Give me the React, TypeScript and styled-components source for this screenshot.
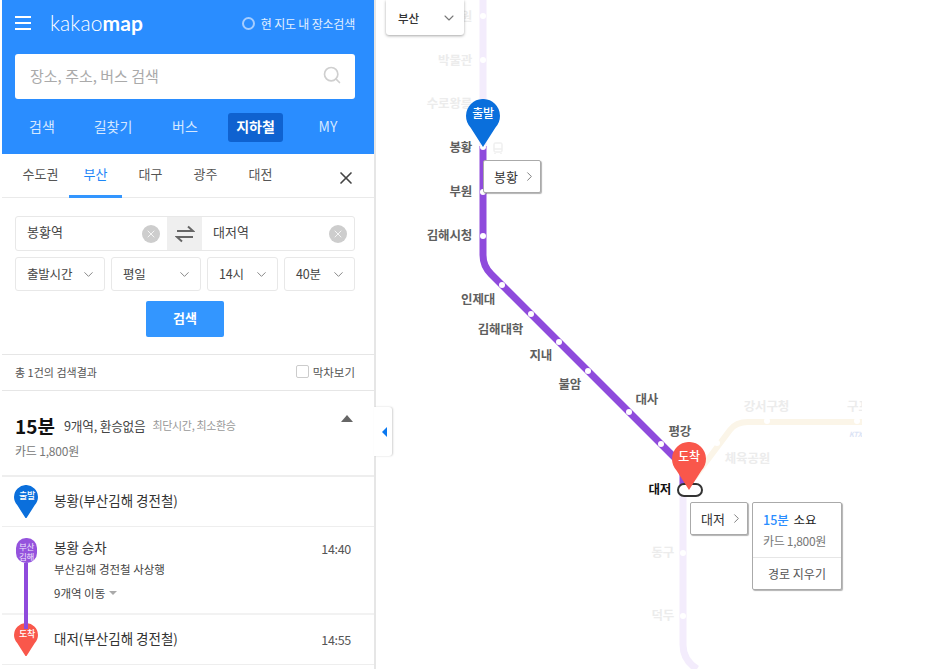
import React from "react";
import styled, { createGlobalStyle } from "styled-components";
import { ChevronDown, ChevronRight, Search, X } from "lucide-react";

const MAP_LEFT = 376;

const GlobalStyle = createGlobalStyle`
    html, body {
        margin: 0;
        padding: 0;
        height: 669px;
        overflow: hidden;
        background: #fff;
    }
    * {
        box-sizing: border-box;
        font-family: "Noto Sans CJK KR", "Noto Sans", sans-serif;
    }
`;

type Tone = "main" | "faint" | "dark";

const stations: { name: string; right: number; y: number; tone: Tone }[] = [
    { name: "연지공원", right: 472, y: 16, tone: "faint" },
    { name: "박물관", right: 472, y: 60, tone: "faint" },
    { name: "수로왕릉", right: 472, y: 103, tone: "faint" },
    { name: "봉황", right: 472, y: 147, tone: "main" },
    { name: "부원", right: 472, y: 191, tone: "main" },
    { name: "김해시청", right: 472, y: 235, tone: "main" },
    { name: "인제대", right: 495, y: 299, tone: "main" },
    { name: "김해대학", right: 523, y: 329, tone: "main" },
    { name: "지내", right: 552, y: 355, tone: "main" },
    { name: "불암", right: 581, y: 384, tone: "main" },
    { name: "대사", right: 658, y: 399, tone: "main" },
    { name: "평강", right: 691, y: 431, tone: "main" },
    { name: "대저", right: 671, y: 489, tone: "dark" },
    { name: "체육공원", right: 770, y: 458, tone: "faint" },
    { name: "강서구청", right: 789, y: 406, tone: "faint" },
    { name: "동구", right: 674, y: 552, tone: "faint" },
    { name: "덕두", right: 674, y: 615, tone: "faint" },
];

const dots = [
    [483, 16], [483, 60], [483, 147], [483, 192], [483, 236],
    [502, 285], [531, 314], [559, 342], [588, 371], [629, 412], [661, 444],
    [683, 553], [683, 616], [717, 443], [767, 421], [857, 421],
];

const Pin = ({ color, size }: { color: string; size: number }) => (
    <svg width={size} height={size * 1.41} viewBox="0 0 34 48" style={{ display: "block" }}>
        <path d="M17 48 L4.5 28.5 A17 17 0 1 1 29.5 28.5 Z" fill={color} />
    </svg>
);

const MapDrawing = () => (
    <MapSvg width="486" height="669" viewBox={`${MAP_LEFT} 0 486 669`}>
        <path d="M483 0V146" stroke="#f3ecfc" strokeWidth="7" fill="none" />
        <path d="M683 490V645Q683 660 697 669" stroke="#f3ecfc" strokeWidth="7" fill="none" />
        <path d="M694 478L730 430Q736 422 748 422H862" stroke="#fbf5e8" strokeWidth="6" fill="none" />
        <path
            d="M483 146V255Q483 266 491 274L675 458Q683 466 683 476V490"
            stroke="#8f4bdc"
            strokeWidth="7"
            fill="none"
        />
        {dots.map(([x, y]) => (
            <circle key={`${x}-${y}`} cx={x} cy={y} r="3" fill="#fff" />
        ))}
        <rect x="678" y="484" width="24" height="12" rx="6" fill="#fff" stroke="#333" strokeWidth="2" />
        <g stroke="#f0f0f0" strokeWidth="1.5" fill="none">
            <rect x="494" y="143" width="8" height="9" rx="1.5" />
            <path d="M494 149H502M495 153V154M501 153V154" />
        </g>
    </MapSvg>
);

export default function App() {
    return (
        <Page>
            <GlobalStyle />
            <Sidebar>
                <Header>
                    <TopBar>
                        <MenuIcon>
                            <i />
                            <i />
                            <i />
                        </MenuIcon>
                        <Logo>
                            kakao<b>map</b>
                        </Logo>
                        <AreaSearch>
                            <Radio />
                            현 지도 내 장소검색
                        </AreaSearch>
                    </TopBar>
                    <SearchBox>
                        <span>장소, 주소, 버스 검색</span>
                        <Search size={20} color="#cfcfcf" strokeWidth={2} />
                    </SearchBox>
                    <Nav>
                        <NavItem>검색</NavItem>
                        <NavItem>길찾기</NavItem>
                        <NavItem>버스</NavItem>
                        <NavItem $active>지하철</NavItem>
                        <NavItem>MY</NavItem>
                    </Nav>
                </Header>

                <Regions>
                    <Region>수도권</Region>
                    <Region $active>부산</Region>
                    <Region>대구</Region>
                    <Region>광주</Region>
                    <Region>대전</Region>
                    <CloseBtn>
                        <X size={20} color="#444" strokeWidth={2} />
                    </CloseBtn>
                </Regions>

                <Form>
                    <RouteInputs>
                        <RouteField>
                            <span>봉황역</span>
                            <ClearBtn>
                                <X size={12} color="#fff" strokeWidth={1.6} />
                            </ClearBtn>
                        </RouteField>
                        <SwapBtn>
                            <svg width="20" height="18" viewBox="0 0 20 18" fill="none" stroke="#666" strokeWidth="2">
                                <path d="M2 6H18L13 1.5" />
                                <path d="M18 12H2L7 16.5" />
                            </svg>
                        </SwapBtn>
                        <RouteField>
                            <span>대저역</span>
                            <ClearBtn>
                                <X size={12} color="#fff" strokeWidth={1.6} />
                            </ClearBtn>
                        </RouteField>
                    </RouteInputs>
                    <Selects>
                        <SelectBox>
                            <span>출발시간</span>
                            <ChevronDown size={15} color="#888" strokeWidth={1.6} />
                        </SelectBox>
                        <SelectBox>
                            <span>평일</span>
                            <ChevronDown size={15} color="#888" strokeWidth={1.6} />
                        </SelectBox>
                        <SelectBox>
                            <span>14시</span>
                            <ChevronDown size={15} color="#888" strokeWidth={1.6} />
                        </SelectBox>
                        <SelectBox>
                            <span>40분</span>
                            <ChevronDown size={15} color="#888" strokeWidth={1.6} />
                        </SelectBox>
                    </Selects>
                    <SubmitBtn>검색</SubmitBtn>
                </Form>

                <CountRow>
                    <span>총 1건의 검색결과</span>
                    <LastTrain>
                        <CheckBox />
                        막차보기
                    </LastTrain>
                </CountRow>

                <Summary>
                    <SummaryTop>
                        <Duration>15분</Duration>
                        <Stops>9개역, 환승없음</Stops>
                        <Tags>최단시간, 최소환승</Tags>
                        <CollapseArrow />
                    </SummaryTop>
                    <Fare>카드 1,800원</Fare>
                </Summary>

                <StepRow>
                    <StepMark>
                        <Pin color="#0a6fdc" size={24} />
                        <PinLabel $size={9} $top={6}>출발</PinLabel>
                    </StepMark>
                    <StepTitle>봉황(부산김해 경전철)</StepTitle>
                </StepRow>

                <RideRow>
                    <LineBadge>
                        <span>부산</span>
                        <span>김해</span>
                    </LineBadge>
                    <LineTrack />
                    <RideBody>
                        <RideHead>
                            <StepTitle>봉황 승차</StepTitle>
                            <Time>14:40</Time>
                        </RideHead>
                        <RideDirection>부산김해 경전철 사상행</RideDirection>
                        <RideStops>
                            9개역 이동
                            <SmallArrow />
                        </RideStops>
                    </RideBody>
                </RideRow>

                <StepRow>
                    <StepMark>
                        <Pin color="#f9574b" size={24} />
                        <PinLabel $size={9} $top={6}>도착</PinLabel>
                    </StepMark>
                    <StepTitle>대저(부산김해 경전철)</StepTitle>
                    <Time>14:55</Time>
                </StepRow>
            </Sidebar>

            <PanelToggle>
                <ToggleArrow />
            </PanelToggle>

            <MapArea>
                <MapDrawing />
                {stations.map((s) => (
                    <StationLabel key={s.name} $right={s.right} $y={s.y} $tone={s.tone}>
                        {s.name}
                    </StationLabel>
                ))}
                <ClippedLabel>구포</ClippedLabel>
                <KtxMark>KTX</KtxMark>

                <CityDropdown>
                    부산
                    <ChevronDown size={16} color="#777" strokeWidth={1.6} />
                </CityDropdown>

                <MapPin $x={483} $tipY={147} $w={34}>
                    <Pin color="#0a6fdc" size={34} />
                    <PinLabel $size={12} $top={7}>출발</PinLabel>
                </MapPin>
                <MapPin $x={689} $tipY={490} $w={34}>
                    <Pin color="#f9574b" size={34} />
                    <PinLabel $size={12} $top={7}>도착</PinLabel>
                </MapPin>

                <StationPopup $x={483} $y={160}>
                    봉황
                    <ChevronRight size={15} color="#777" strokeWidth={1.5} />
                </StationPopup>
                <StationPopup $x={690} $y={502}>
                    대저
                    <ChevronRight size={15} color="#777" strokeWidth={1.5} />
                </StationPopup>

                <InfoCard>
                    <InfoTop>
                        <InfoTime>
                            <em>15분</em> 소요
                        </InfoTime>
                        <InfoFare>카드 1,800원</InfoFare>
                    </InfoTop>
                    <InfoClear>경로 지우기</InfoClear>
                </InfoCard>
            </MapArea>
        </Page>
    );
}

const Page = styled.div`
    position: relative;
    display: flex;
    width: 927px;
    height: 669px;
    overflow: hidden;
    background: #fff;
`;

const Sidebar = styled.aside`
    flex: 0 0 376px;
    min-width: 0;
    height: 669px;
    padding-left: 2px;
    border-right: 2px solid #e6e6e6;
    display: flex;
    flex-direction: column;
    background: #fff;
    z-index: 2;
    color: #333;
`;

const Header = styled.header`
    height: 154px;
    flex: none;
    padding: 0 19px 0 13px;
    background: #2a8dff;
    color: #fff;
`;

const TopBar = styled.div`
    height: 54px;
    display: flex;
    align-items: center;
`;

const MenuIcon = styled.div`
    width: 16px;
    height: 14px;
    display: flex;
    flex-direction: column;
    justify-content: space-between;
    margin-top: -9px;

    i {
        display: block;
        height: 2px;
        background: #fff;
    }
`;

const Logo = styled.div`
    margin: -10px 0 0 19px;
    font-family: "Lato", sans-serif;
    font-size: 21px;
    font-weight: 300;
    letter-spacing: 0.1px;

    b {
        font-family: "Lato", sans-serif;
        font-weight: 700;
    }
`;

const AreaSearch = styled.div`
    margin: -7px 0 0 auto;
    display: flex;
    align-items: center;
    gap: 6px;
    font-size: 12px;
    color: #e3f0ff;
    letter-spacing: -0.2px;
`;

const Radio = styled.span`
    width: 13px;
    height: 13px;
    border: 2px solid #a5cdff;
    border-radius: 50%;
`;

const SearchBox = styled.div`
    height: 45px;
    display: flex;
    align-items: center;
    justify-content: space-between;
    padding: 0 13px 3px 15px;
    background: #fff;
    border-radius: 3px;
    color: #aaa;
    font-size: 15px;
`;

const Nav = styled.nav`
    margin-top: 14px;
    height: 29px;
    display: grid;
    grid-template-columns: 54px 88px 56px 15px 55px 18px 54px;

    & > :nth-child(4) {
        grid-column: 5;
    }
    & > :nth-child(5) {
        grid-column: 7;
    }
`;

const NavItem = styled.div<{ $active?: boolean }>`
    display: flex;
    align-items: center;
    justify-content: center;
    padding-bottom: 4px;
    border-radius: 3px;
    font-size: 14px;
    font-weight: ${(p) => (p.$active ? 700 : 400)};
    color: ${(p) => (p.$active ? "#fff" : "#d5e8ff")};
    background: ${(p) => (p.$active ? "#0f62d0" : "transparent")};
`;

const Regions = styled.div`
    position: relative;
    height: 44px;
    flex: none;
    display: grid;
    grid-template-columns: 11px repeat(5, 55px);
    border-bottom: 1px solid #eaeaea;

    & > :nth-child(1) {
        grid-column: 2;
    }
`;

const Region = styled.div<{ $active?: boolean }>`
    display: flex;
    align-items: center;
    justify-content: center;
    height: 44px;
    margin: 0 1px;
    padding-bottom: 2px;
    font-size: 13px;
    color: ${(p) => (p.$active ? "#1d86f7" : "#555")};
    border-bottom: 3px solid ${(p) => (p.$active ? "#3396ff" : "transparent")};
`;

const CloseBtn = styled.div`
    position: absolute;
    right: 18px;
    top: 14px;
    line-height: 0;
`;

const Form = styled.div`
    height: 157px;
    flex: none;
    padding: 18px 19px 0 13px;
    border-bottom: 1px solid #e6e6e6;
    display: flex;
    flex-direction: column;
`;

const RouteInputs = styled.div`
    height: 35px;
    display: grid;
    grid-template-columns: 1fr 35px 152px;
    border: 1px solid #e8e8e8;
    border-radius: 3px;
`;

const RouteField = styled.div`
    display: flex;
    align-items: center;
    justify-content: space-between;
    padding: 0 7px 0 11px;
    font-size: 13px;
    color: #444;

    span:first-child {
        margin-top: -5px;
    }
`;

const ClearBtn = styled.span`
    width: 18px;
    height: 18px;
    border-radius: 50%;
    background: #cdcdcd;
    display: flex;
    align-items: center;
    justify-content: center;
`;

const SwapBtn = styled.div`
    display: flex;
    align-items: center;
    justify-content: center;
    background: #efefef;
`;

const Selects = styled.div`
    margin-top: 6px;
    height: 34px;
    display: grid;
    grid-template-columns: 90px 90px 71px 71px;
    gap: 6px;
`;

const SelectBox = styled.div`
    display: flex;
    align-items: center;
    justify-content: space-between;
    padding: 0 8px 0 11px;
    border: 1px solid #e8e8e8;
    border-radius: 3px;
    font-size: 12.5px;
    color: #444;
    letter-spacing: -0.2px;

    span {
        margin-top: -2px;
    }
`;

const SubmitBtn = styled.div`
    align-self: center;
    margin-top: 10px;
    width: 78px;
    height: 36px;
    display: flex;
    align-items: center;
    justify-content: center;
    padding-bottom: 4px;
    border-radius: 2px;
    background: #3396ff;
    color: #fff;
    font-size: 13px;
    font-weight: 700;
`;

const CountRow = styled.div`
    height: 36px;
    flex: none;
    display: flex;
    align-items: center;
    justify-content: space-between;
    padding: 0 19px 2px 13px;
    border-bottom: 1px solid #e6e6e6;
    font-size: 11px;
    color: #555;
`;

const LastTrain = styled.div`
    display: flex;
    align-items: center;
    gap: 4px;
    font-size: 11.5px;
`;

const CheckBox = styled.span`
    width: 13px;
    height: 13px;
    border: 1px solid #ccc;
    border-radius: 2px;
`;

const Summary = styled.section`
    height: 86px;
    flex: none;
    padding: 19px 19px 0 13px;
    border-bottom: 2px solid #eee;
`;

const SummaryTop = styled.div`
    position: relative;
    display: flex;
    align-items: center;
    height: 30px;
`;

const Duration = styled.strong`
    font-size: 19px;
    font-weight: 700;
    color: #111;
`;

const Stops = styled.span`
    margin-left: 9px;
    font-size: 12.7px;
    color: #444;
    letter-spacing: -0.2px;
`;

const Tags = styled.span`
    margin-left: 7px;
    font-size: 11px;
    color: #999;
    letter-spacing: -0.35px;
`;

const CollapseArrow = styled.i`
    position: absolute;
    right: 2px;
    top: 5px;
    border: 6px solid transparent;
    border-top: 0;
    border-bottom: 7px solid #666;
`;

const Fare = styled.div`
    margin-top: 2px;
    font-size: 12px;
    color: #777;
    letter-spacing: -0.2px;
`;

const StepRow = styled.div`
    height: 50px;
    flex: none;
    display: flex;
    align-items: center;
    padding: 0 23px 0 12px;
    border-bottom: 1px solid #eee;
`;

const StepMark = styled.div`
    position: relative;
    flex: none;
    width: 26px;
    margin-right: 14px;
`;

const PinLabel = styled.span<{ $size: number; $top: number }>`
    position: absolute;
    left: 0;
    right: 0;
    top: ${(p) => p.$top}px;
    text-align: center;
    line-height: 1.1;
    font-size: ${(p) => p.$size}px;
    font-weight: 500;
    color: #fff;
    letter-spacing: -0.3px;
`;

const StepTitle = styled.div`
    margin-top: -3px;
    font-size: 13.5px;
    color: #333;
`;

const Time = styled.div`
    margin-left: auto;
    font-size: 12.5px;
    color: #555;
    letter-spacing: -0.3px;
`;

const RideRow = styled.div`
    position: relative;
    height: 88px;
    flex: none;
    padding: 11px 23px 0 52px;
    border-bottom: 2px solid #f2f2f2;
`;

const LineBadge = styled.div`
    position: absolute;
    left: 14px;
    top: 11px;
    width: 21px;
    height: 25px;
    border-radius: 10px;
    background: #9553dd;
    color: #efe5fb;
    display: flex;
    flex-direction: column;
    align-items: center;
    justify-content: center;
    font-size: 8.5px;
    letter-spacing: -0.4px;

    span {
        height: 10px;
        line-height: 10px;
    }
`;

const LineTrack = styled.div`
    position: absolute;
    left: 22px;
    top: 36px;
    width: 4px;
    height: 66px;
    background: #8f4bdc;
    z-index: 1;
`;

const RideBody = styled.div`
    display: flex;
    flex-direction: column;
`;

const RideHead = styled.div`
    display: flex;
    align-items: center;
    height: 20px;
`;

const RideDirection = styled.div`
    margin-top: 3px;
    font-size: 11.5px;
    color: #444;
`;

const RideStops = styled.div`
    margin-top: 8px;
    display: flex;
    align-items: center;
    gap: 4px;
    font-size: 11.5px;
    color: #444;
`;

const SmallArrow = styled.i`
    border: 4px solid transparent;
    border-bottom: 0;
    border-top: 4px solid #aaa;
`;

const PanelToggle = styled.div`
    position: absolute;
    left: 374px;
    top: 407px;
    width: 18px;
    height: 49px;
    background: #fff;
    border-radius: 0 3px 3px 0;
    box-shadow: 1px 0 2px rgba(0, 0, 0, 0.18);
    display: flex;
    align-items: center;
    justify-content: center;
    z-index: 3;
`;

const ToggleArrow = styled.i`
    margin-left: 2px;
    border: 5px solid transparent;
    border-left: 0;
    border-right: 5px solid #0a78f0;
`;

const MapArea = styled.main`
    position: relative;
    flex: 1;
    height: 669px;
    overflow: hidden;
`;

const MapSvg = styled.svg`
    position: absolute;
    left: 0;
    top: 0;
`;

const toneColor = { main: "#5f5f5f", faint: "#ececec", dark: "#111" };

const StationLabel = styled.span<{ $right: number; $y: number; $tone: Tone }>`
    position: absolute;
    right: ${(p) => 927 - p.$right}px;
    top: ${(p) => p.$y - 9}px;
    line-height: 18px;
    font-size: 12.5px;
    font-weight: 700;
    letter-spacing: -0.2px;
    white-space: nowrap;
    color: ${(p) => toneColor[p.$tone]};
`;

const ClippedLabel = styled.span`
    position: absolute;
    left: ${847 - MAP_LEFT}px;
    top: 397px;
    width: 15px;
    overflow: hidden;
    white-space: nowrap;
    line-height: 18px;
    font-size: 12.5px;
    font-weight: 700;
    color: #ececec;
`;

const KtxMark = styled.span`
    position: absolute;
    left: ${849 - MAP_LEFT}px;
    top: 429px;
    width: 13px;
    overflow: hidden;
    font-size: 7px;
    line-height: 10px;
    font-weight: 700;
    font-style: italic;
    color: #dbe3f5;
`;

const CityDropdown = styled.div`
    position: absolute;
    left: ${386 - MAP_LEFT}px;
    top: 0;
    width: 78px;
    height: 35px;
    display: flex;
    align-items: center;
    justify-content: space-between;
    padding: 0 7px 0 12px;
    background: #fff;
    border-radius: 0 0 3px 3px;
    box-shadow: 0 1px 3px rgba(0, 0, 0, 0.35);
    font-size: 11.5px;
    font-weight: 500;
    color: #333;
`;

const MapPin = styled.div<{ $x: number; $tipY: number; $w: number }>`
    position: absolute;
    left: ${(p) => p.$x - MAP_LEFT - p.$w / 2}px;
    top: ${(p) => p.$tipY - p.$w * 1.41}px;
    width: ${(p) => p.$w}px;
`;

const StationPopup = styled.div<{ $x: number; $y: number }>`
    position: absolute;
    left: ${(p) => p.$x - MAP_LEFT}px;
    top: ${(p) => p.$y}px;
    width: 58px;
    height: 33px;
    display: flex;
    align-items: center;
    justify-content: space-between;
    padding: 0 3px 0 10px;
    background: #fff;
    border: 1px solid #aaa;
    border-radius: 2px;
    box-shadow: 1px 1px 1px rgba(0, 0, 0, 0.3);
    font-size: 13px;
    color: #333;
`;

const InfoCard = styled.div`
    position: absolute;
    left: ${752 - MAP_LEFT}px;
    top: 502px;
    width: 90px;
    height: 88px;
    display: flex;
    flex-direction: column;
    background: #fff;
    border: 1px solid #aaa;
    border-radius: 2px;
    box-shadow: 1px 1px 1px rgba(0, 0, 0, 0.3);
`;

const InfoTop = styled.div`
    height: 55px;
    padding: 8px 0 0 10px;
    border-bottom: 1px solid #e6e6e6;
`;

const InfoTime = styled.div`
    font-size: 12.5px;
    line-height: 18px;
    color: #222;

    em {
        font-style: normal;
        font-weight: 500;
        color: #2a8dff;
        margin-right: 2px;
    }
`;

const InfoFare = styled.div`
    margin-top: 3px;
    font-size: 12px;
    line-height: 17px;
    color: #777;
    letter-spacing: -0.3px;
`;

const InfoClear = styled.div`
    flex: 1;
    display: flex;
    align-items: center;
    justify-content: center;
    font-size: 12px;
    color: #555;
`;
